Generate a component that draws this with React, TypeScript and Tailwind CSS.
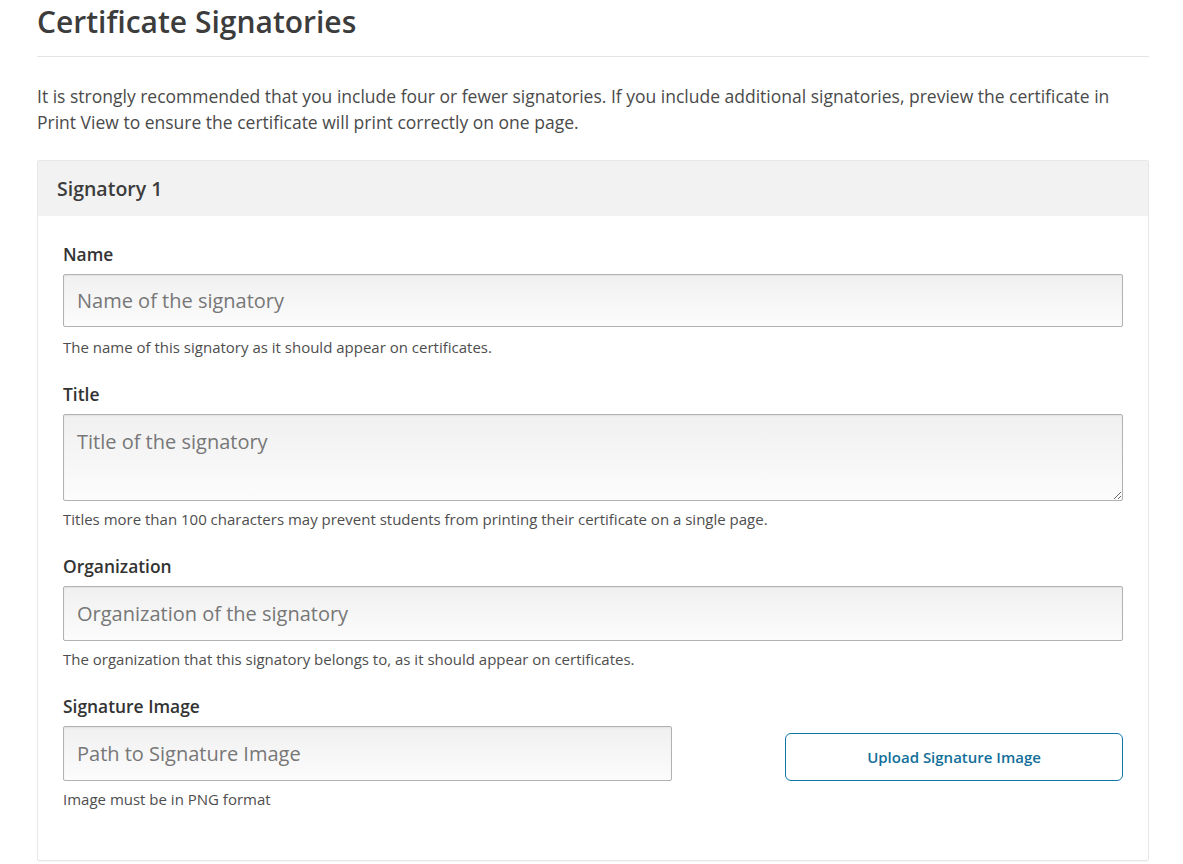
import React from "react";

const font = { fontFamily: '"Open Sans", "Noto Sans", sans-serif' };

function Label({ children }: { children: React.ReactNode }) {
  return <label className="block text-[17.4px] font-semibold text-[#333] leading-[24px]">{children}</label>;
}

function Help({ children, tight }: { children: React.ReactNode; tight?: boolean }) {
  return (
    <p className={`text-[15px] text-[#4e4e4e] leading-[20px] ${tight ? "mt-[8px]" : "mt-[10px]"}`}>{children}</p>
  );
}

const inputCls =
  "block w-full border border-[#b2b2b2] rounded-[2px] bg-gradient-to-b from-[#f0f0f0] to-[#fcfcfc] px-[13px] text-[20px] text-[#333] placeholder:text-[#777] shadow-[inset_0_1px_2px_rgba(0,0,0,0.06)] outline-none";

export default function App() {
  return (
    <div className="bg-white min-h-[864px] w-[1183px]" style={font}>
      <div className="pl-[37px] pr-[34px]">
        <h1 className="text-[30px] font-semibold text-[#3c3c3c] leading-[40px] pt-[2px] pb-[14px] border-b border-[#e4e4e4]">
          Certificate Signatories
        </h1>
        <p className="mt-[26px] text-[17.5px] leading-[26px] text-[#4a4a4a]">
          It is strongly recommended that you include four or fewer signatories. If you include additional signatories, preview the certificate in Print View to ensure the certificate will print correctly on one page.
        </p>
        <div className="mt-[25px] border border-[#e8e8e8] rounded-[2px] shadow-[0_1px_1px_rgba(0,0,0,0.04)]">
          <div className="bg-[#f2f2f2] h-[55px] flex items-center px-[19px]">
            <h2 className="text-[19.5px] font-semibold text-[#3c3c3c]">Signatory 1</h2>
          </div>
          <div className="px-[25px] pt-[26px] pb-[51px]">
            <Label>Name</Label>
            <input className={`${inputCls} h-[53px] mt-[8px]`} placeholder="Name of the signatory" />
            <Help>The name of this signatory as it should appear on certificates.</Help>

            <div className="mt-[25px]">
              <Label>Title</Label>
              <textarea
                className={`${inputCls} h-[87px] mt-[8px] pt-[13px] leading-[28px] resize-y`}
                placeholder="Title of the signatory"
              />
              <Help tight>Titles more than 100 characters may prevent students from printing their certificate on a single page.</Help>
            </div>

            <div className="mt-[25px]">
              <Label>Organization</Label>
              <input className={`${inputCls} h-[55px] mt-[8px]`} placeholder="Organization of the signatory" />
              <Help tight>The organization that this signatory belongs to, as it should appear on certificates.</Help>
            </div>

            <div className="mt-[25px] flex items-start">
              <div className="w-[609px]">
                <Label>Signature Image</Label>
                <input className={`${inputCls} h-[55px] mt-[8px]`} placeholder="Path to Signature Image" />
                <Help tight>Image must be in PNG format</Help>
              </div>
              <div className="flex-1 pl-[113px] pt-[39px]">
                <button className="w-full h-[48px] border border-[#0e76a8] rounded-[6px] text-[#126f9a] text-[15px] font-semibold bg-white">
                  Upload Signature Image
                </button>
              </div>
            </div>
          </div>
        </div>
      </div>
    </div>
  );
}
